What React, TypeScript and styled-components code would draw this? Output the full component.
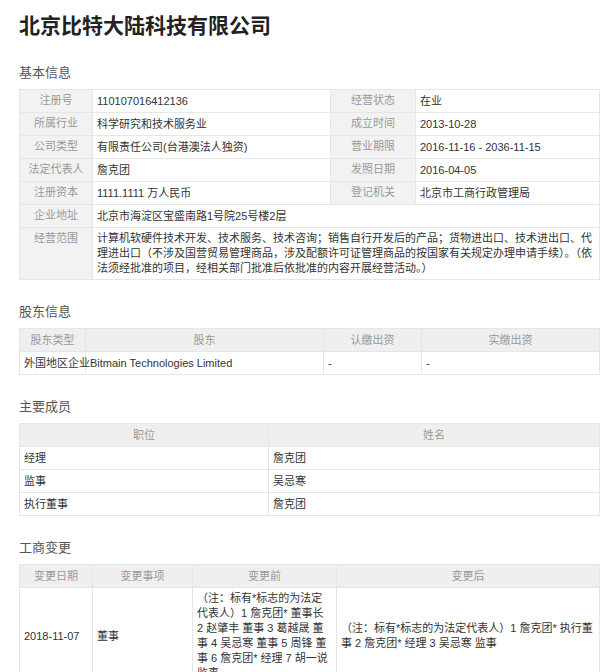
import React from "react";
import styled, { createGlobalStyle } from "styled-components";

const Global = createGlobalStyle`
  body { margin: 0; font-family: "Liberation Sans", Arial, "Noto Sans CJK SC", sans-serif; color: #333; background: #fff; }
`;
const Page = styled.div`padding: 8px 0 0 19px; width: 581px;`;
const Title = styled.h1`font-size: 21px; font-weight: bold; margin: 4px 0 24px; color: #222; line-height: 28px;`;
const H2 = styled.h2`font-size: 13px; font-weight: normal; color: #555; margin: 0 0 7px; line-height: 18px;`;
const Table = styled.table`width: 581px; border-collapse: collapse; table-layout: fixed; font-size: 11px; margin-bottom: 23px;`;
const Td = styled.td<{ $label?: boolean; $center?: boolean }>`
  border: 1px solid #e6e6e6; padding: 3px 4px; height: 16px; line-height: 15px;
  background: ${(p) => (p.$label ? "#f2f2f2" : "#fff")};
  color: ${(p) => (p.$label ? "#999" : "#333")};
  text-align: ${(p) => (p.$label || p.$center ? "center" : "left")};
  vertical-align: ${(p) => (p.$label ? "top" : "middle")};
  white-space: ${(p) => (p.$label ? "nowrap" : "normal")};
`;
const Th = styled.th`border: 1px solid #e6e6e6; background: #efefef; color: #999; font-weight: normal; padding: 3px 4px; height: 16px; line-height: 15px;`;

const basic = [
  ["注册号", "110107016412136", "经营状态", "在业"],
  ["所属行业", "科学研究和技术服务业", "成立时间", "2013-10-28"],
  ["公司类型", "有限责任公司(台港澳法人独资)", "营业期限", "2016-11-16 - 2036-11-15"],
  ["法定代表人", "詹克团", "发照日期", "2016-04-05"],
  ["注册资本", "1111.1111 万人民币", "登记机关", "北京市工商行政管理局"],
];

export default function App() {
  return (
    <Page>
      <Global />
      <Title>北京比特大陆科技有限公司</Title>
      <H2>基本信息</H2>
      <Table>
        <colgroup><col style={{ width: 73 }} /><col style={{ width: 238 }} /><col style={{ width: 85 }} /><col /></colgroup>
        <tbody>
          {basic.map((r) => (
            <tr key={r[0]}>
              <Td $label>{r[0]}</Td><Td>{r[1]}</Td><Td $label>{r[2]}</Td><Td>{r[3]}</Td>
            </tr>
          ))}
          <tr><Td $label>企业地址</Td><Td colSpan={3}>北京市海淀区宝盛南路1号院25号楼2层</Td></tr>
          <tr><Td $label>经营范围</Td><Td colSpan={3}>计算机软硬件技术开发、技术服务、技术咨询；销售自行开发后的产品；货物进出口、技术进出口、代理进出口（不涉及国营贸易管理商品，涉及配额许可证管理商品的按国家有关规定办理申请手续）。（依法须经批准的项目，经相关部门批准后依批准的内容开展经营活动。）</Td></tr>
        </tbody>
      </Table>
      <H2>股东信息</H2>
      <Table>
        <colgroup><col style={{ width: 66 }} /><col style={{ width: 238 }} /><col style={{ width: 98 }} /><col /></colgroup>
        <thead><tr><Th>股东类型</Th><Th>股东</Th><Th>认缴出资</Th><Th>实缴出资</Th></tr></thead>
        <tbody><tr><Td style={{ whiteSpace: "nowrap" }}>外国地区企业</Td><Td>Bitmain Technologies Limited</Td><Td>-</Td><Td>-</Td></tr></tbody>
      </Table>
      <H2>主要成员</H2>
      <Table>
        <colgroup><col style={{ width: 249 }} /><col /></colgroup>
        <thead><tr><Th>职位</Th><Th>姓名</Th></tr></thead>
        <tbody>
          {[["经理", "詹克团"], ["监事", "吴忌寒"], ["执行董事", "詹克团"]].map((r) => (
            <tr key={r[0]}><Td>{r[0]}</Td><Td>{r[1]}</Td></tr>
          ))}
        </tbody>
      </Table>
      <H2>工商变更</H2>
      <Table>
        <colgroup><col style={{ width: 73 }} /><col style={{ width: 100 }} /><col style={{ width: 144 }} /><col /></colgroup>
        <thead><tr><Th>变更日期</Th><Th>变更事项</Th><Th>变更前</Th><Th>变更后</Th></tr></thead>
        <tbody>
          <tr>
            <Td>2018-11-07</Td><Td>董事</Td>
            <Td>（注：标有*标志的为法定代表人）1 詹克团* 董事长 2 赵肇丰 董事 3 葛越晟 董事 4 吴忌寒 董事 5 周锋 董事 6 詹克团* 经理 7 胡一说 监事</Td>
            <Td>（注：标有*标志的为法定代表人）1 詹克团* 执行董事 2 詹克团* 经理 3 吴忌寒 监事</Td>
          </tr>
          <tr><Td /><Td /><Td /><Td /></tr>
        </tbody>
      </Table>
    </Page>
  );
}
